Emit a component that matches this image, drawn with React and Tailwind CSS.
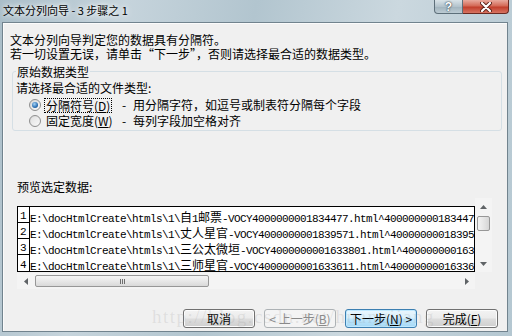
import React from "react";

const CJK = /([\u3000-\u303f\u4e00-\u9fff\uff00-\uffef]+)/;

const rows = [
  "E:\\docHtmlCreate\\htmls\\1\\自1邮票-VOCY4000000001834477.html^4000000001834477.html",
  "E:\\docHtmlCreate\\htmls\\1\\丈人星官-VOCY4000000001839571.html^4000000001839571.html",
  "E:\\docHtmlCreate\\htmls\\1\\三公太微垣-VOCY4000000001633801.html^4000000001633801.html",
  "E:\\docHtmlCreate\\htmls\\1\\三师星官-VOCY4000000001633611.html^4000000001633611.html",
];

function Mixed({ text }) {
  return text.split(CJK).map((part, i) =>
    i % 2 === 1 ? (
      <span key={i} className="font-['Noto_Sans_CJK_SC',sans-serif] text-[12px] tracking-[0px]">
        {part}
      </span>
    ) : (
      <span key={i}>{part}</span>
    )
  );
}

function Radio({ checked }) {
  return (
    <span className="flex h-[12px] w-[12px] shrink-0 items-center justify-center rounded-full border border-[#8f8f8f] bg-[linear-gradient(135deg,#d6d6d6,#fbfbfb)]">
      {checked ? (
        <span className="h-[6px] w-[6px] rounded-full bg-[radial-gradient(circle_at_40%_35%,#a6d4f6,#2b6fb3_60%,#16467f)]" />
      ) : (
        <span className="h-[8px] w-[8px] rounded-full bg-[linear-gradient(135deg,#e2e2e2,#f7f7f7)]" />
      )}
    </span>
  );
}

function Tri({ dir }) {
  const d = {
    up: "M0 4 L3.5 0 L7 4Z",
    down: "M0 0 L3.5 4 L7 0Z",
    left: "M4 0 L0 3.5 L4 7Z",
    right: "M0 0 L4 3.5 L0 7Z",
  }[dir];
  const wide = dir === "up" || dir === "down";
  return (
    <svg width={wide ? 7 : 4} height={wide ? 4 : 7} viewBox={wide ? "0 0 7 4" : "0 0 4 7"}>
      <path d={d} fill="#5f6366" />
    </svg>
  );
}

function Btn({ kind, children }) {
  const styles = {
    normal:
      "border-[#707070] bg-[linear-gradient(#f3f3f3_0%,#ebebeb_48%,#dddddd_52%,#cfcfcf_100%)] shadow-[inset_0_0_0_1px_#fcfcfc] text-black",
    disabled: "border-[#adb2b5] bg-[#f4f4f4] text-[#8a8a8a]",
    primary:
      "border-[#3c7fb1] bg-[linear-gradient(#eaf6fd_0%,#d9f0fc_48%,#bee6fd_52%,#a7d9f5_100%)] shadow-[inset_0_0_0_1px_#bfe9ff] text-black",
  }[kind];
  return (
    <div className={`flex h-[19px] w-[72px] items-center justify-center rounded-[3px] border text-[12px] leading-none ${styles}`}>
      {children}
    </div>
  );
}

export default function App() {
  return (
    <div className="relative h-[336px] w-[512px] overflow-hidden bg-[linear-gradient(100deg,#a9bdc8_0%,#c6d4dc_22%,#b2c5cf_45%,#cbd8df_70%,#b4c7d1_100%)] font-['Noto_Sans_CJK_SC',sans-serif] text-[12px] text-black">
      {/* title bar */}
      <div className="flex h-[22px] justify-between pl-[3px] pr-[3px]">
        <div className="pt-[3px] text-[11px] leading-[14px] [text-shadow:0_0_4px_#fff,0_0_8px_#fff]">文本分列向导 - 3 步骤之 1</div>
        <div className="flex h-[14px]">
          <div className="flex w-[29px] items-center justify-center rounded-bl-[4px] border border-t-0 border-[#5d6f7a] bg-[linear-gradient(#d9e3e8,#b3c3cc_50%,#a3b5bf_55%,#bccbd3)] font-['Liberation_Sans',sans-serif] text-[12px] font-bold leading-none text-white [text-shadow:0_0_1px_#33434c,0_0_2px_#33434c]">
            ?
          </div>
          <div className="flex w-[46px] items-center justify-center rounded-br-[4px] border border-l-0 border-t-0 border-[#6a2a22] bg-[linear-gradient(#e8aa9e,#d46a57_45%,#c23f2c_55%,#d77462)]">
            <svg width="12" height="10" viewBox="0 0 12 10">
              <path d="M2 1 L10 9 M10 1 L2 9" stroke="#5a2119" strokeWidth="4" strokeLinecap="round" />
              <path d="M2 1 L10 9 M10 1 L2 9" stroke="#fff" strokeWidth="2.2" strokeLinecap="round" />
            </svg>
          </div>
        </div>
      </div>

      {/* client area */}
      <div className="ml-[2px] h-[310px] w-[506px] border border-[#71838e] bg-[#f0f0f0] shadow-[inset_1px_1px_0_#fbfbfb]">
        <div className="pl-[7px] pt-[10px] leading-[14px]">
          <div>文本分列向导判定您的数据具有分隔符。</div>
          <div>若一切设置无误，请单击“下一步”，否则请选择最合适的数据类型。</div>
        </div>

        {/* group box */}
        <div className="relative ml-[9px] mt-[10px] h-[60px] w-[490px] rounded-[3px] border border-[#d5dfe5] pl-[3px] pt-[9px] leading-[14px]">
          <span className="absolute -top-[7px] left-[3px] bg-[#f0f0f0] px-[1px]">原始数据类型</span>
          <div>请选择最合适的文件类型:</div>
          <div className="mt-[2px] flex h-[16px] items-center pl-[13px]">
            <Radio checked />
            <div className="ml-[3px] w-[78px]">
              <span className="inline-block border border-dotted border-black px-[1px] leading-[13px]">
                分隔符号(<u>D</u>)
              </span>
            </div>
            <span className="w-[11px]">-</span>
            <span>用分隔字符，如逗号或制表符分隔每个字段</span>
          </div>
          <div className="flex h-[16px] items-center pl-[13px]">
            <Radio />
            <div className="ml-[3px] w-[78px] pl-[2px]">
              固定宽度(<u>W</u>)
            </div>
            <span className="w-[11px]">-</span>
            <span>每列字段加空格对齐</span>
          </div>
        </div>

        <div className="mt-[49px] pl-[14px] leading-[14px]">预览选定数据:</div>

        {/* preview grid + vertical scrollbar */}
        <div className="ml-[14px] mt-[4px] flex items-end">
          <div className="h-[66px] w-[458px] overflow-hidden border border-black bg-white">
            {rows.map((r, i) => (
              <div key={i} className="flex h-[16px]">
                <div
                  className={`flex w-[12px] shrink-0 items-end border-r border-black pl-[2px] font-['Liberation_Mono',monospace] text-[11px] leading-[12px] ${
                    i < 3 ? "border-b" : ""
                  }`}
                >
                  {i + 1}
                </div>
                <div className="h-[16px] overflow-hidden whitespace-nowrap font-['Liberation_Mono',monospace] text-[11px] leading-[19px] tracking-[-0.6px]">
                  <Mixed text={r} />
                </div>
              </div>
            ))}
          </div>
          <div className="flex h-[74px] w-[17px] flex-col bg-[#f4f4f4]">
            <div className="flex h-[17px] items-center justify-center">
              <Tri dir="up" />
            </div>
            <div className="ml-[2px] mt-[1px] h-[15px] w-[13px] rounded-[2px] border border-[#979797] bg-[linear-gradient(90deg,#f4f4f4,#e6e6e6_50%,#d6d6d6)]" />
            <div className="flex-1" />
            <div className="flex h-[17px] items-center justify-center">
              <Tri dir="down" />
            </div>
          </div>
        </div>

        {/* horizontal scrollbar */}
        <div className="ml-[14px] mt-[1px] flex h-[16px] w-[458px] items-center bg-[#f4f4f4]">
          <div className="flex h-[16px] w-[17px] items-center justify-center">
            <Tri dir="left" />
          </div>
          <div className="ml-[1px] flex h-[12px] w-[174px] items-center justify-center gap-[1px] rounded-[2px] border border-[#979797] bg-[linear-gradient(#f5f5f5,#e8e8e8_50%,#d9d9d9)]">
            <span className="h-[5px] w-[1px] bg-[#6f6f6f]" />
            <span className="h-[5px] w-[1px] bg-[#6f6f6f]" />
            <span className="h-[5px] w-[1px] bg-[#6f6f6f]" />
          </div>
          <div className="flex-1" />
          <div className="flex h-[16px] w-[17px] items-center justify-center">
            <Tri dir="right" />
          </div>
        </div>

        {/* buttons */}
        <div className="mt-[20px] flex justify-end gap-[9px] pr-[9px]">
          <Btn kind="normal">取消</Btn>
          <Btn kind="disabled">
            &lt; 上一步(<u>B</u>)
          </Btn>
          <Btn kind="primary">
            下一步(<u>N</u>) &gt;
          </Btn>
          <Btn kind="normal">
            完成(<u>F</u>)
          </Btn>
        </div>
      </div>

      {/* watermark */}
      <div className="pointer-events-none absolute left-[152px] top-[306px] whitespace-nowrap font-['Liberation_Serif',serif] text-[19px] leading-[22px] tracking-[1.5px] text-[#9a9a9a]/20">
        http://blog.csdn.net/huangjiang
      </div>
    </div>
  );
}
